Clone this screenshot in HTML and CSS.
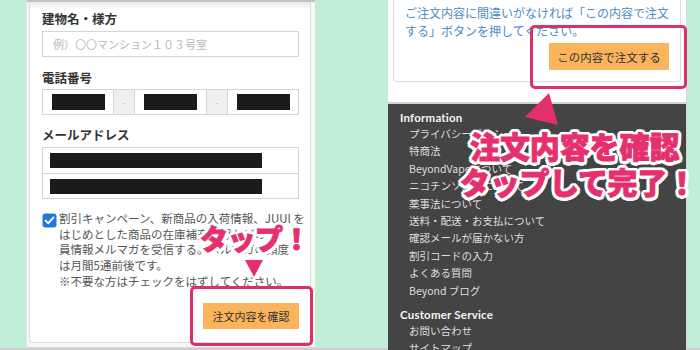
FILE: index.html
```html
<!DOCTYPE html>
<html lang="ja">
<head>
<meta charset="utf-8">
<link rel="stylesheet" href="styles.css">
</head>
<body>
<div class="stage">
  <section class="phone left">
    <div class="card form">
      <div class="label">建物名・様方</div>
      <div class="input placeholder">例）〇〇マンション１０３号室</div>

      <div class="label gap12">電話番号</div>
      <div class="tel">
        <div class="seg"><span class="redact"></span></div>
        <div class="sep">-</div>
        <div class="seg"><span class="redact"></span></div>
        <div class="sep">-</div>
        <div class="seg"><span class="redact"></span></div>
      </div>

      <div class="label gap11">メールアドレス</div>
      <div class="mail">
        <div class="mrow"><span class="redact wide"></span></div>
        <div class="mrow"><span class="redact wide"></span></div>
      </div>

      <div class="optin">
        <svg class="check" viewBox="0 0 15 15" width="15" height="15"><rect x="0.5" y="0.5" width="14" height="14" rx="3" fill="#1f77e0"/><path d="M3.6 7.6 L6.3 10.2 L11.4 4.6" fill="none" stroke="#fff" stroke-width="2" stroke-linecap="round" stroke-linejoin="round"/></svg>
        <p class="optin-text">割引キャンペーン、新商品の入荷情報、JUUl を<br>はじめとした商品の在庫補充情報などの会<br>員情報メルマガを受信する。メルマガの頻度<br>は月間5通前後です。<br>※不要な方はチェックをはずしてください。</p>
      </div>

      <div class="actions">
        <button class="btn btn-confirm">注文内容を確認</button>
      </div>
    </div>
  </section>

  <section class="phone right">
    <div class="card confirm">
      <p class="notice">ご注文内容に間違いがなければ「この内容で注文<br>する」ボタンを押してください。</p>
      <div class="actions">
        <button class="btn btn-order">この内容で注文する</button>
      </div>
    </div>
    <footer class="footer">
      <h3 class="fhead">Information</h3>
      <ul class="flinks">
        <li>プライバシーポリシー</li>
        <li>特商法</li>
        <li>BeyondVapeについて</li>
        <li>ニコチンソルトについて</li>
        <li>薬事法について</li>
        <li>送料・配送・お支払について</li>
        <li>確認メールが届かない方</li>
        <li>割引コードの入力</li>
        <li>よくある質問</li>
        <li>Beyond ブログ</li>
      </ul>
      <h3 class="fhead cs">Customer Service</h3>
      <ul class="flinks">
        <li>お問い合わせ</li>
        <li>サイトマップ</li>
      </ul>
    </footer>
  </section>

  <div class="callout callout-left"></div>
  <div class="callout callout-right"></div>

  <div class="anno anno-tap">タップ！</div>
  <svg class="arrow arrow-down" viewBox="0 0 18 17" width="18" height="17"><polygon points="0,0 18,0 9,17" fill="#e3306c"/></svg>

  <div class="anno anno-big"><span class="l1">注文内容を確認</span><br><span class="l2">タップして完了！</span></div>
  <svg class="arrow arrow-up" viewBox="0 0 36 34" width="36" height="34"><polygon points="25,1 1,25 34,33" fill="#e3306c"/></svg>
</div>
</body>
</html>
```
FILE: styles.css
```css
* { box-sizing: border-box; }
html, body { margin: 0; padding: 0; }
body {
  width: 700px;
  height: 350px;
  overflow: hidden;
  background: #c1eed7;
  font-family: "Noto Sans CJK JP", "Noto Sans", sans-serif;
}
.stage {
  position: relative;
  display: flex;
  align-items: stretch;
  height: 350px;
  padding-left: 26px;
  border-bottom: 2px solid #cfcfcf;
}
.phone { display: flex; flex-direction: column; }

/* left phone */
.left {
  width: 289px;
  background: #f7f7f7;
  border-top: 2px solid #c3c3c3;
  border-left: 1px solid #e6e6e6;
  border-bottom: 1px solid #dadada;
  padding: 0 4px 4px 2px;
}
.card {
  background: #fff;
  border: 1px solid #dcdcdc;
  border-top: none;
  border-radius: 0 0 4px 4px;
}
.form {
  flex: 1;
  padding: 8px 11px 0 12px;
  background: linear-gradient(#e9e9e9, #fff 7px);
  display: flex;
  flex-direction: column;
}
.label {
  font-size: 12.5px;
  font-weight: 700;
  line-height: 18px;
  color: #333;
  margin-bottom: 3px;
}
.gap12 { margin-top: 12px; margin-bottom: 2px; }
.gap11 { margin-top: 11px; }
.input {
  height: 26px;
  border: 1px solid #d5d5d5;
  display: flex;
  align-items: center;
  padding-left: 10px;
}
.placeholder { font-size: 11px; color: #b9b9b9; }
.tel {
  display: flex;
  height: 26px;
  border: 1px solid #d5d5d5;
}
.seg {
  width: 71px;
  display: flex;
  align-items: center;
  justify-content: center;
}
.seg:first-child { width: 70px; }
.seg:last-child { flex: 1; }
.sep {
  width: 22px;
  background: #efefef;
  border-left: 1px solid #d5d5d5;
  border-right: 1px solid #d5d5d5;
  color: #aaa;
  font-size: 8px;
  display: flex;
  align-items: center;
  justify-content: center;
}
.redact { display: block; width: 53px; height: 16px; background: #1b1b1b; }
.redact.wide { width: 212px; height: 15px; }
.mail { border: 1px solid #d5d5d5; }
.mrow {
  height: 25px;
  display: flex;
  align-items: center;
  padding-left: 7px;
}
.mrow + .mrow { border-top: 1px solid #d5d5d5; }
.optin {
  display: flex;
  align-items: flex-start;
  gap: 2px;
  margin-top: 12px;
}
.check { flex: none; margin-top: 2px; }
.optin-text {
  margin: 0;
  font-size: 11.5px;
  line-height: 15.7px;
  color: #555;
  white-space: nowrap;
}
.actions { display: flex; justify-content: flex-end; }
.btn {
  border: none;
  background: #fbb35c;
  color: #333;
  font-family: inherit;
  font-size: 11px;
  padding: 0;
}
.btn-confirm { width: 96px; height: 26px; margin-top: 13px; }

/* right phone */
.right {
  width: 299px;
  margin-left: 73px;
  background: #fff;
  border-right: 1px solid #d5d5d5;
}
.confirm {
  margin: 0 5px;
  padding: 4px 11px 11px 11px;
}
.notice {
  margin: 0;
  font-size: 12px;
  line-height: 17.5px;
  color: #4b8bc6;
  white-space: nowrap;
}
.btn-order { width: 120px; height: 27px; margin-top: 4px; font-size: 11.5px; }
.footer {
  flex: 1;
  margin-top: 20px;
  border-top: 2px solid #d2d2d2;
  background: #444;
  padding: 0 0 0 12px;
}
.fhead {
  margin: 7px 0 0;
  font-family: "Lato", "Noto Sans", sans-serif;
  font-weight: 700;
  font-size: 11.5px;
  line-height: 14px;
  color: #f4f4f4;
  letter-spacing: 0.2px;
}
.fhead.cs { margin-top: 9px; }
.flinks {
  list-style: none;
  margin: 0;
  padding: 0 0 0 9px;
}
.flinks li {
  font-size: 10.5px;
  line-height: 17.4px;
  color: #dedede;
  white-space: nowrap;
}

/* annotations */
.callout {
  position: absolute;
  border: 3px solid #d9326b;
  border-radius: 5px;
}
.callout-left { left: 190px; top: 286px; width: 123px; height: 60px; }
.callout-right { left: 530px; top: 25px; width: 157px; height: 64px; }
.anno {
  position: absolute;
  color: #e5306d;
  font-weight: 900;
  white-space: nowrap;
  -webkit-text-stroke: 0.9px #e5306d;
  text-shadow:
    3.5px 0 0 #fff, -3.5px 0 0 #fff, 0 3.5px 0 #fff, 0 -3.5px 0 #fff,
    2.5px 2.5px 0 #fff, -2.5px 2.5px 0 #fff, 2.5px -2.5px 0 #fff, -2.5px -2.5px 0 #fff,
    3.2px 1.5px 0 #fff, -3.2px 1.5px 0 #fff, 3.2px -1.5px 0 #fff, -3.2px -1.5px 0 #fff,
    1.5px 3.2px 0 #fff, -1.5px 3.2px 0 #fff, 1.5px -3.2px 0 #fff, -1.5px -3.2px 0 #fff;
}
.anno-tap { left: 200px; top: 223px; font-size: 28px; line-height: 30px; letter-spacing: -0.5px; }
.anno-big { left: 468px; top: 127px; font-size: 30px; line-height: 36px; }
.anno-big .l1 { letter-spacing: -0.1px; margin-left: 2px; }
.anno-big .l2 { letter-spacing: -0.3px; margin-left: -8px; }
.arrow { position: absolute; }
.arrow-down { left: 245px; top: 260px; }
.arrow-up { left: 524px; top: 92px; }
```
